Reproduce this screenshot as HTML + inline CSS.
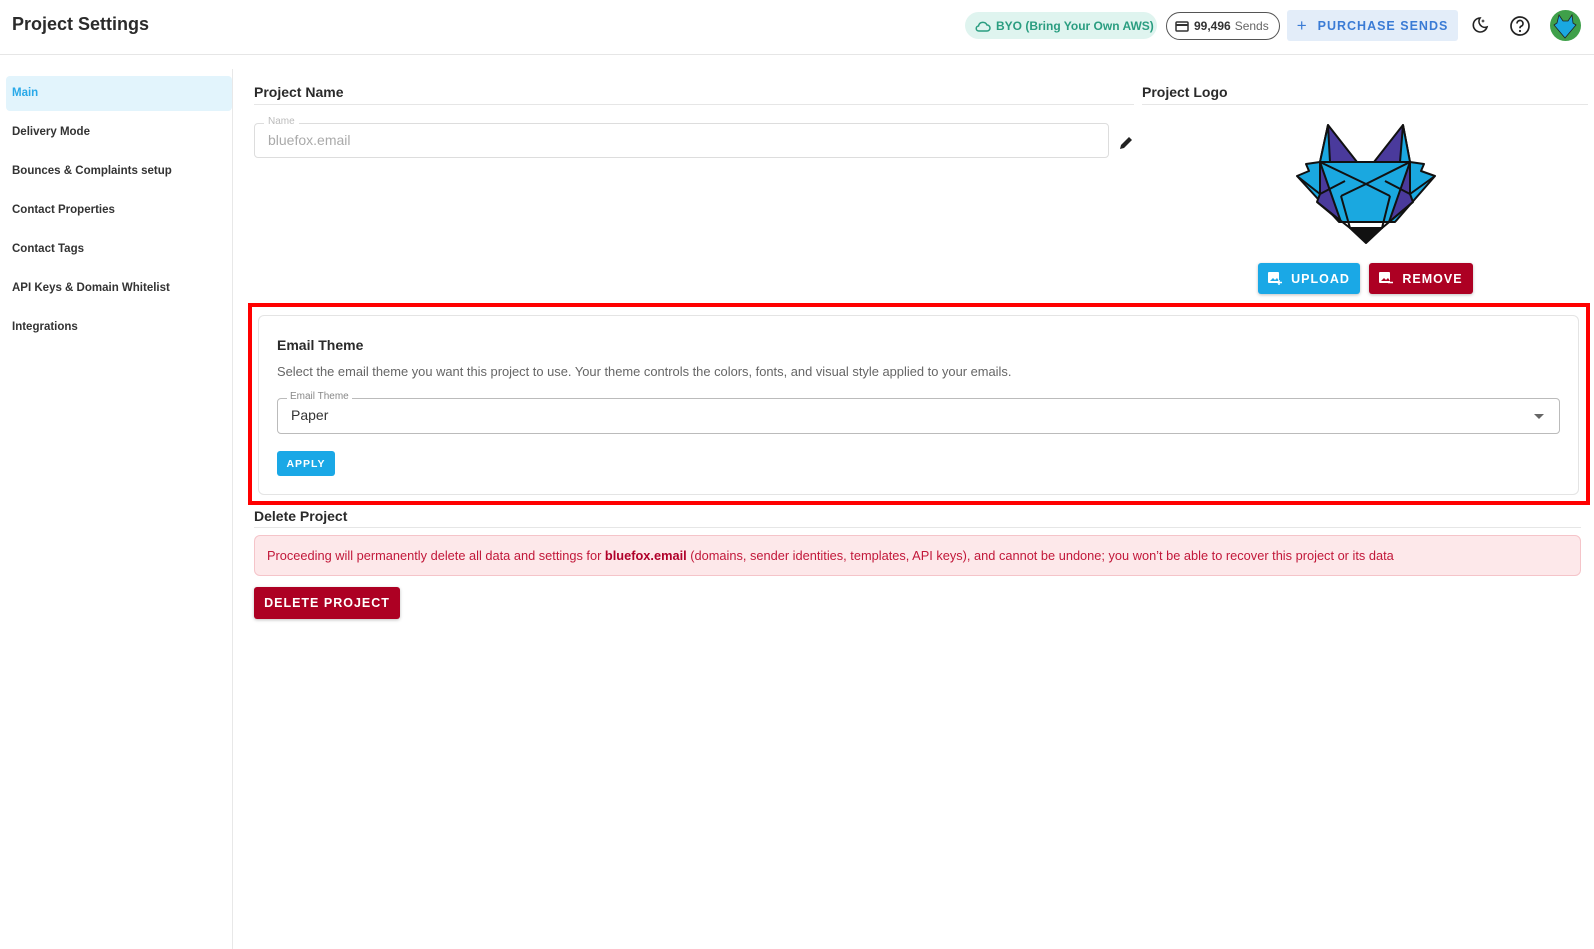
<!DOCTYPE html>
<html><head><meta charset="utf-8"><style>
*{box-sizing:border-box;margin:0;padding:0}
body{width:1594px;height:949px;background:#fff;font-family:"Liberation Sans",sans-serif;color:#222;position:relative;overflow:hidden}
.a{position:absolute}
.hdr{left:0;top:0;width:1594px;height:55px;border-bottom:1px solid #e6e6e6}
.side{left:232px;top:69px;width:1px;height:880px;background:#e8e8e8}
.nav{left:12px;font-size:11.5px;font-weight:bold;color:#333}
h3{position:absolute;font-size:14px;font-weight:bold;color:#2a2a2a}
.line{height:1px;background:#e6e6e6}
.btn{display:flex;align-items:center;justify-content:center;color:#fff;font-weight:bold;letter-spacing:1px;border-radius:3px;box-shadow:0 1px 3px rgba(0,0,0,.25)}
</style></head><body>
<div class="a hdr"></div>
<div class="a" style="left:12px;top:14px;font-size:18px;font-weight:bold;color:#2b2b2b">Project Settings</div>
<div class="a" style="left:965px;top:12px;width:192px;height:27px;border-radius:14px;background:#dff4ef;color:#2a9d80;font-size:12px;font-weight:bold;display:flex;align-items:center;padding-left:10px">
<svg width="16" height="12" viewBox="0 0 16 12" style="margin-right:5px"><path d="M4 11h8a3 3 0 0 0 0-6 4.5 4.5 0 0 0-8.5 1A2.5 2.5 0 0 0 4 11z" fill="none" stroke="#2a9d80" stroke-width="1.5"/></svg>BYO (Bring Your Own AWS)</div>
<div class="a" style="left:1166px;top:12px;width:114px;height:28px;border-radius:14px;border:1.5px solid #555;font-size:12px;display:flex;align-items:center;padding-left:8px;color:#666">
<svg width="14" height="11" viewBox="0 0 14 11" style="margin-right:5px"><rect x="1" y="1" width="12" height="9" rx="1" fill="none" stroke="#333" stroke-width="1.5"/><rect x="1" y="3" width="12" height="2" fill="#333"/></svg><b style="color:#333;margin-right:4px">99,496</b>Sends</div>
<div class="a" style="left:1287px;top:10px;width:171px;height:31px;border-radius:3px;background:#e3edf9;color:#3a7bd5;font-size:12.5px;font-weight:bold;letter-spacing:1px;display:flex;align-items:center;justify-content:center"><span style="font-size:17px;margin-right:10px;font-weight:normal">+</span>PURCHASE SENDS</div>
<svg class="a" style="left:1471px;top:16px" width="18" height="18" viewBox="0 0 18 18"><path d="M9 2a7 7 0 1 0 7 9 6 6 0 0 1-7-9z" fill="none" stroke="#222" stroke-width="1.6"/><path d="M12 3l.6 1.4L14 5l-1.4.6L12 7l-.6-1.4L10 5l1.4-.6z" fill="#222"/></svg>
<svg class="a" style="left:1509px;top:15px" width="22" height="22" viewBox="0 0 22 22"><circle cx="11" cy="11" r="9" fill="none" stroke="#222" stroke-width="1.7"/><path d="M8 8.5a3 3 0 1 1 4 2.8c-.8.4-1 1-1 2" fill="none" stroke="#222" stroke-width="1.7"/><circle cx="11" cy="16" r="1.1" fill="#222"/></svg>
<div class="a" style="left:1550px;top:10px;width:31px;height:31px;border-radius:50%;background:#3fa04a;overflow:hidden">
<svg width="31" height="31" viewBox="0 0 31 31"><path d="M9 5l4 6h5l4-6 1 8 3 2-11 13L4 15l3-2z" fill="#1aa8e0" stroke="#222" stroke-width=".8"/></svg></div>

<div class="a" style="left:6px;top:76px;width:226px;height:35px;background:#e2f4fc;border-radius:4px"></div>
<div class="a nav" style="top:87px;color:#29a9e8">Main</div>
<div class="a nav" style="top:126px">Delivery Mode</div>
<div class="a nav" style="top:165px">Bounces &amp; Complaints setup</div>
<div class="a nav" style="top:204px">Contact Properties</div>
<div class="a nav" style="top:243px">Contact Tags</div>
<div class="a nav" style="top:282px">API Keys &amp; Domain Whitelist</div>
<div class="a nav" style="top:321px">Integrations</div>
<div class="a side"></div>

<h3 style="left:254px;top:84px">Project Name</h3>
<div class="a line" style="left:254px;top:104px;width:880px"></div>
<h3 style="left:1142px;top:84px">Project Logo</h3>
<div class="a line" style="left:1142px;top:104px;width:446px"></div>
<div class="a" style="left:254px;top:123px;width:855px;height:35px;border:1px solid #ddd;border-radius:4px"></div>
<div class="a" style="left:264px;top:116px;background:#fff;padding:0 4px;font-size:10px;color:#bbb">Name</div>
<div class="a" style="left:268px;top:132px;font-size:14px;color:#aaa">bluefox.email</div>
<svg class="a" style="left:1118px;top:135px" width="16" height="16" viewBox="0 0 16 16"><path d="M2 14l1-4 8-8 3 3-8 8z" fill="#222"/></svg>

<svg class="a" style="left:1290px;top:118px" width="152" height="130" viewBox="1290 118 152 130">
<g stroke="#111" stroke-width="2" stroke-linejoin="round">
<path d="M1328 125L1320 162H1357z" fill="#4a3a9c"/>
<path d="M1403 125L1410 162H1374z" fill="#4a3a9c"/>
<path d="M1328 125L1320 162l10 0z" fill="#1aa8e0"/>
<path d="M1403 125L1410 162l-10 0z" fill="#1aa8e0"/>
<path d="M1297 176l12-5-3-7 14-2h90l14 2-3 7 14 5-40 46h-56z" fill="#1aa8e0"/>
<path d="M1320 162v32l-3 8 24 20z" fill="#4a3a9c"/>
<path d="M1410 162v32l3 8-24 20z" fill="#4a3a9c"/>
<path d="M1320 162l46 22 44-22" fill="none"/>
<path d="M1320 194l25-13M1410 194l-25-13M1341 196l25-12 24 12" fill="none"/>
<path d="M1341 196l9 32h32l8-32" fill="none"/>
<path d="M1297 176l23 18M1435 176l-25 18" fill="none"/>
<path d="M1317 202l33 26h32l31-26" fill="none"/>
<path d="M1350 228h32l-16 15z" fill="#111"/>
</g></svg>

<div class="a btn" style="left:1258px;top:263px;width:102px;height:31px;background:#1aa8e6;font-size:12.5px"><svg width="14" height="13" style="margin-right:9px" viewBox="0 0 14 13"><rect x="0" y="0" width="11" height="11" rx="1" fill="#fff"/><path d="M2 9l3-3 2 2 2-2 2 3z" fill="#1aa8e6"/><path d="M11 8v5M9 10.5h5" stroke="#fff" stroke-width="1.5"/></svg>UPLOAD</div>
<div class="a btn" style="left:1369px;top:263px;width:104px;height:31px;background:#ad0023;font-size:12.5px"><svg width="14" height="13" style="margin-right:9px" viewBox="0 0 14 13"><rect x="0" y="0" width="11" height="11" rx="1" fill="#fff"/><path d="M2 9l3-3 2 2 2-2 2 3z" fill="#ad0023"/><path d="M9 10.5h5" stroke="#fff" stroke-width="1.5"/></svg>REMOVE</div>

<div class="a" style="left:248px;top:303px;width:1342px;height:202px;border:4.5px solid #f00"></div>
<div class="a" style="left:258px;top:315px;width:1321px;height:180px;border:1px solid #e4e4e4;border-radius:6px"></div>
<div class="a" style="left:277px;top:337px;font-size:14px;font-weight:bold;color:#2a2a2a">Email Theme</div>
<div class="a" style="left:277px;top:364px;font-size:12.9px;color:#666">Select the email theme you want this project to use. Your theme controls the colors, fonts, and visual style applied to your emails.</div>
<div class="a" style="left:277px;top:398px;width:1283px;height:36px;border:1px solid #bbb;border-radius:4px"></div>
<div class="a" style="left:287px;top:391px;background:#fff;padding:0 3px;font-size:10px;color:#888">Email Theme</div>
<div class="a" style="left:291px;top:407px;font-size:14px;color:#333">Paper</div>
<div class="a" style="left:1534px;top:414px;width:0;height:0;border-left:5px solid transparent;border-right:5px solid transparent;border-top:5px solid #666"></div>
<div class="a btn" style="left:277px;top:451px;width:58px;height:25px;background:#1aa8e6;font-size:10.5px;box-shadow:none">APPLY</div>

<h3 style="left:254px;top:508px">Delete Project</h3>
<div class="a line" style="left:254px;top:527px;width:1327px"></div>
<div class="a" style="left:254px;top:535px;width:1327px;height:41px;background:#fde8ea;border:1px solid #f5c4c9;border-radius:6px;font-size:12.8px;color:#c2183a;padding:12px 12px;white-space:nowrap">Proceeding will permanently delete all data and settings for <b style="color:#b0002a">bluefox.email</b> (domains, sender identities, templates, API keys), and cannot be undone; you won’t be able to recover this project or its data</div>
<div class="a btn" style="left:254px;top:587px;width:146px;height:32px;background:#ad0023;font-size:12.5px">DELETE PROJECT</div>
</body></html>
